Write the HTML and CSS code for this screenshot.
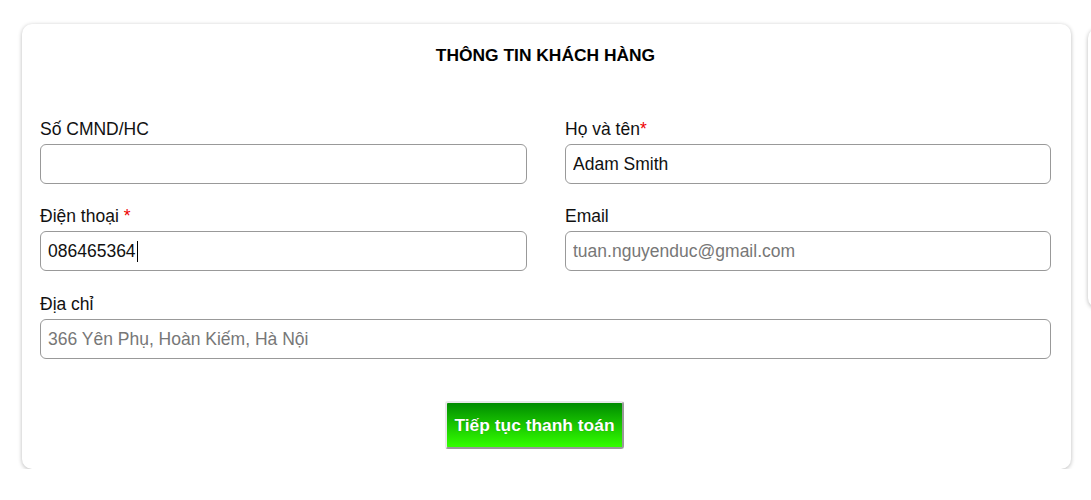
FILE: index.html
```html
<!DOCTYPE html>
<html lang="vi">
<head>
<meta charset="utf-8">
<title>Thông tin khách hàng</title>
<link rel="stylesheet" href="styles.css">
</head>
<body>
<div class="page">
  <div class="card">
    <h2 class="title">THÔNG TIN KHÁCH HÀNG</h2>
    <div class="grid">
      <div class="field">
        <label class="label">Số CMND/HC</label>
        <input class="input" type="text" value="">
      </div>
      <div class="field">
        <label class="label">Họ và tên<span class="req">*</span></label>
        <input class="input" type="text" value="Adam Smith">
      </div>
      <div class="field">
        <label class="label">Điện thoại <span class="req">*</span></label>
        <div class="input filled">086465364<span class="caret"></span></div>
      </div>
      <div class="field">
        <label class="label">Email</label>
        <input class="input" type="text" placeholder="tuan.nguyenduc@gmail.com">
      </div>
      <div class="field wide">
        <label class="label">Địa chỉ</label>
        <input class="input" type="text" placeholder="366 Yên Phụ, Hoàn Kiếm, Hà Nội">
      </div>
    </div>
    <div class="actions">
      <button class="btn" type="button">Tiếp tục thanh toán</button>
    </div>
  </div>
  <div class="side"></div>
</div>
</body>
</html>
```

FILE: styles.css
```css
html, body {
  margin: 0;
  padding: 0;
  background: #fff;
  font-family: "Liberation Sans", Arial, sans-serif;
  color: #111;
}
.page {
  display: flex;
  gap: 17px;
  padding: 24px 0 0 22px;
  overflow: hidden;
  width: 1091px;
  box-sizing: border-box;
}
.card {
  flex: 0 0 1048px;
  box-sizing: border-box;
  height: 445px;
  border-radius: 10px;
  background: #fff;
  box-shadow: 0 1px 4px rgba(0,0,0,0.28);
  padding: 21px 20px 0 18px;
}
.title {
  margin: 0;
  text-align: center;
  font-size: 17.4px;
  font-weight: bold;
  line-height: 21px;
  color: #000;
}
.grid {
  display: grid;
  grid-template-columns: 487px 486px;
  column-gap: 38px;
  row-gap: 22px;
  margin-top: 53px;
}
.field {
  display: flex;
  flex-direction: column;
}
.field.wide {
  grid-column: 1 / span 2;
  margin-top: 1px;
}
.label {
  font-size: 17.5px;
  line-height: 20px;
  margin-bottom: 5px;
  padding-top: 1px;
  margin-top: -1px;
  color: #111;
}
.req {
  color: #e00;
}
.input {
  box-sizing: border-box;
  height: 40px;
  width: 100%;
  border: 1px solid #999;
  border-radius: 6px;
  padding: 0 7px;
  font-family: "Liberation Sans", Arial, sans-serif;
  font-size: 17.5px;
  color: #111;
  background: #fff;
  outline: none;
}
.input::placeholder {
  color: #777;
}
.filled {
  display: flex;
  align-items: center;
}
.caret {
  display: inline-block;
  width: 1px;
  height: 21px;
  background: #000;
  margin-left: 1px;
}
.actions {
  display: flex;
  justify-content: center;
  margin-top: 42px;
  padding-right: 22px;
}
.btn {
  box-sizing: border-box;
  width: 179px;
  height: 48px;
  border-style: solid;
  border-width: 2px;
  border-color: #e8e8e8 #999 #999 #e8e8e8;
  border-radius: 3px;
  background: linear-gradient(#008c00, #33ff00);
  color: #fff;
  font-family: "Liberation Sans", Arial, sans-serif;
  font-size: 17.4px;
  font-weight: bold;
  padding: 0;
  text-shadow: 0 0 1px rgba(0,0,0,0.3);
}
.side {
  flex: 0 0 300px;
  height: 280px;
  margin-top: 4px;
  border-radius: 10px;
  box-shadow: 0 1px 4px rgba(0,0,0,0.28);
}
```
